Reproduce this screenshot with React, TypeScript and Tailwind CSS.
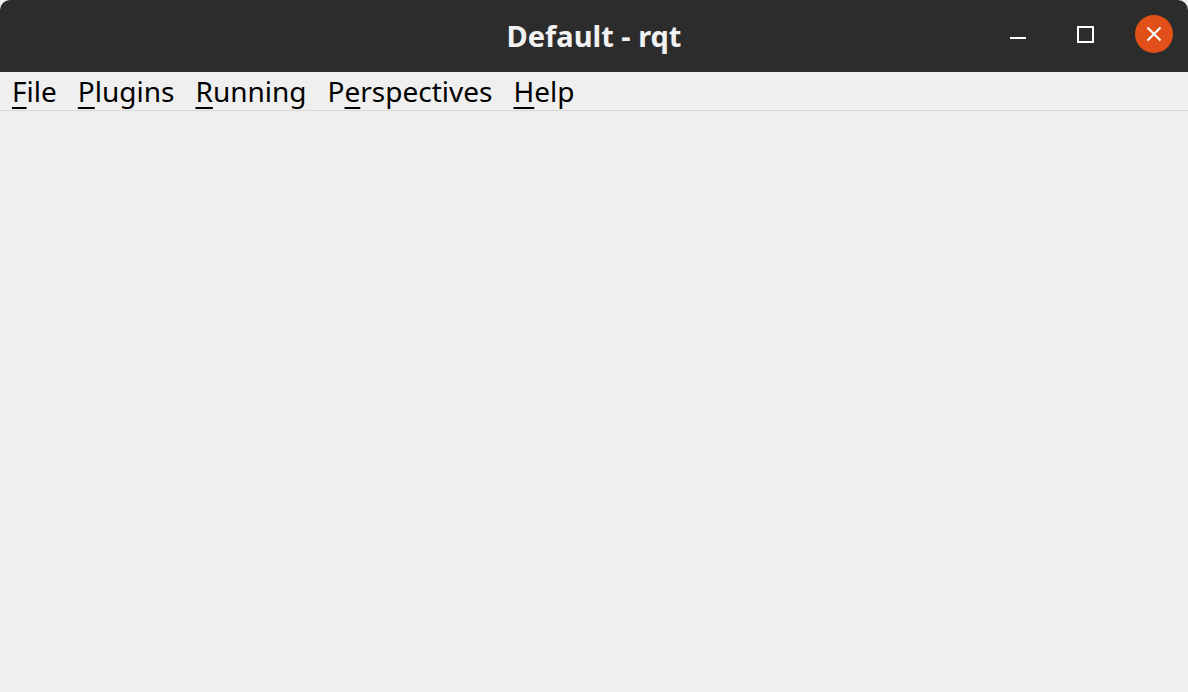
export default function App() {
  const menus: { pre: string; key: string; post: string }[] = [
    { pre: "", key: "F", post: "ile" },
    { pre: "", key: "P", post: "lugins" },
    { pre: "", key: "R", post: "unning" },
    { pre: "P", key: "e", post: "rspectives" },
    { pre: "", key: "H", post: "elp" },
  ];

  return (
    <div className="flex h-[692px] w-[1188px] flex-col overflow-hidden bg-[#efefef] [font-family:'Noto_Sans','DejaVu_Sans',sans-serif]">
      {/* title bar */}
      <div className="relative flex h-[72px] shrink-0 items-center justify-center rounded-t-[10px] bg-[#2c2c2c]">
        <span className="-mt-[2px] text-[29px] font-bold leading-none text-[#f2f2f2]">Default - rqt</span>
        <div className="absolute right-[15px] top-[15px] flex items-center">
          <button className="flex h-[38px] w-[38px] items-center justify-center">
            <span className="mt-[8px] block h-[2px] w-[16px] bg-white" />
          </button>
          <button className="ml-[29px] flex h-[38px] w-[38px] items-center justify-center">
            <span className="block h-[17px] w-[17px] border-2 border-white" />
          </button>
          <button className="ml-[31px] flex h-[38px] w-[38px] items-center justify-center rounded-full bg-[#e2501a]">
            <svg width="16" height="16" viewBox="0 0 16 16">
              <path d="M1.5 1.5 L14.5 14.5 M14.5 1.5 L1.5 14.5" stroke="white" strokeWidth="2.2" />
            </svg>
          </button>
        </div>
      </div>

      {/* menu bar */}
      <div className="flex h-[39px] shrink-0 items-center gap-[21px] border-b border-[#d8d8d8] pl-[12px]">
        {menus.map((m) => (
          <span key={m.pre + m.key + m.post} className="text-[28px] leading-none text-black">
            {m.pre}
            <span className="underline decoration-2 underline-offset-[5px]">{m.key}</span>
            {m.post}
          </span>
        ))}
      </div>

      <div className="flex-1" />
    </div>
  );
}
